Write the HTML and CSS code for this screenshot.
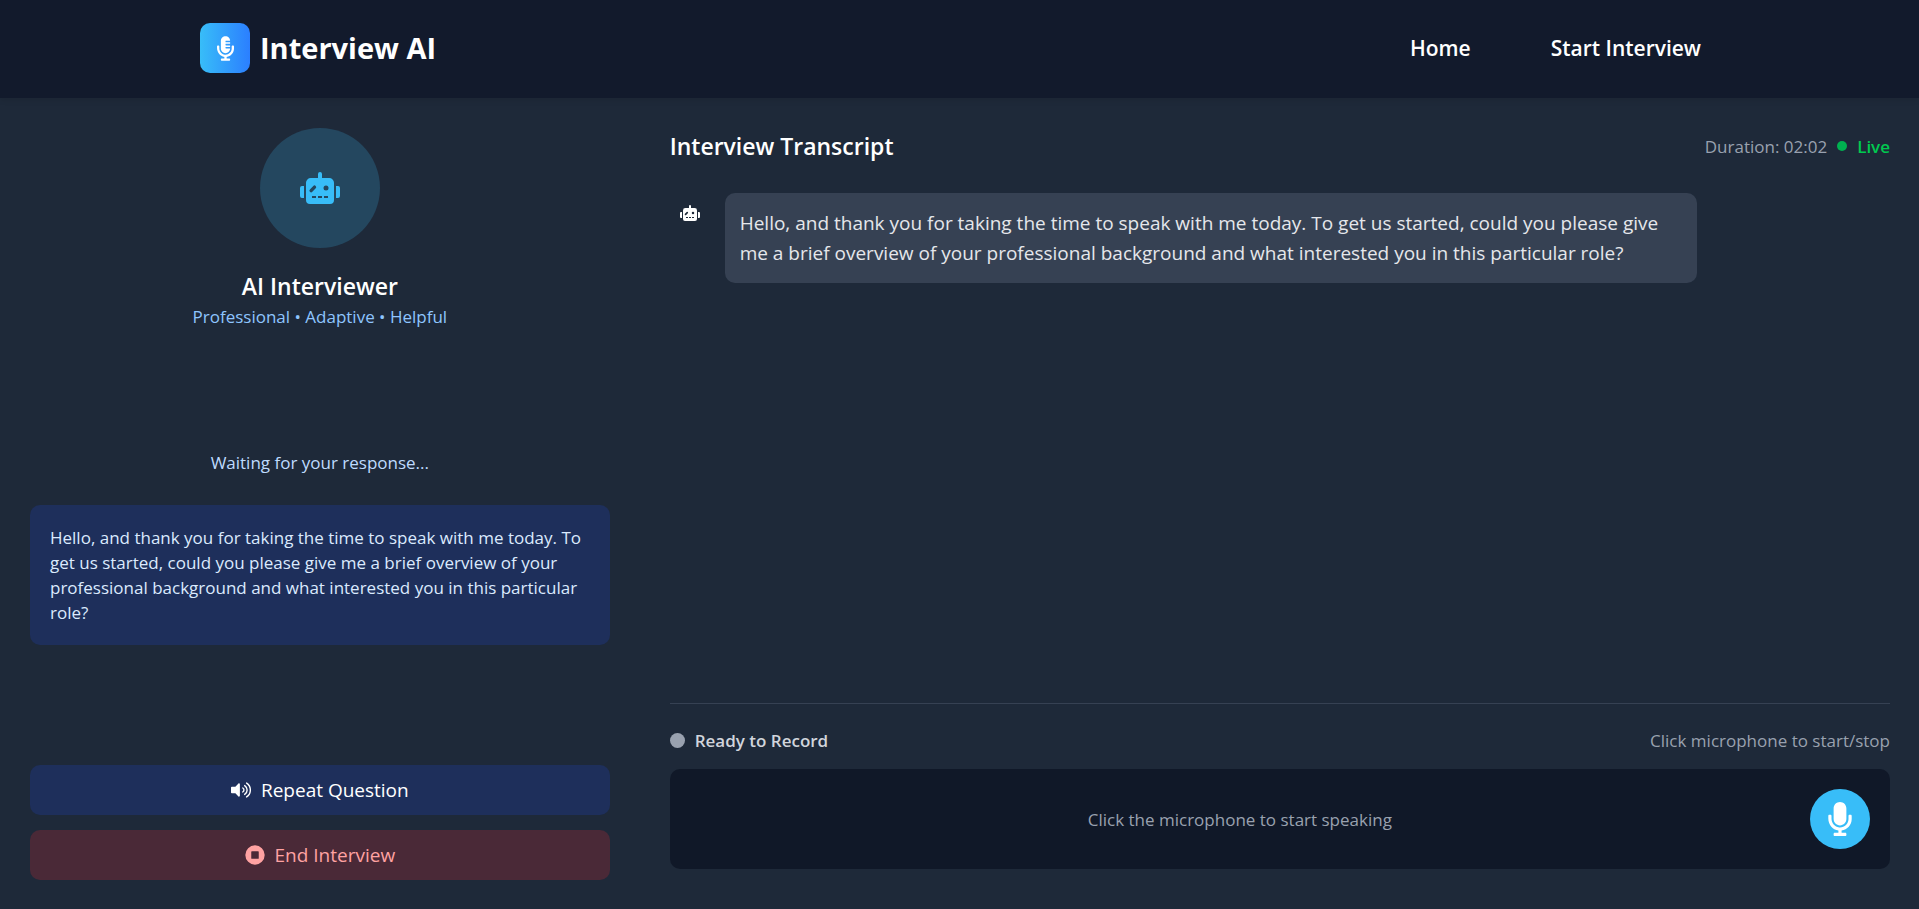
FILE: index.html
```html
<!DOCTYPE html>
<html lang="en">
<head>
<meta charset="utf-8">
<meta name="viewport" content="width=device-width, initial-scale=1">
<title>Interview AI</title>
<link rel="stylesheet" href="styles.css">
</head>
<body>
<svg class="defs" aria-hidden="true">
  <mask id="robot-face" maskUnits="userSpaceOnUse" x="0" y="0" width="640" height="512">
    <rect width="640" height="512" fill="#fff"/>
    <path d="M178 298L232 242" stroke="#000" stroke-width="54" stroke-linecap="round"/>
    <circle cx="416" cy="256" r="40" fill="#000"/>
    <path fill="#000" d="M192 384h64v32h-64zM288 384h64v32h-64zM384 384h64v32h-64z"/>
  </mask>
  <symbol id="robot" viewBox="0 0 640 512">
    <path mask="url(#robot-face)" d="M32 224h32v192H32a32 32 0 0 1-32-32V256a32 32 0 0 1 32-32zM544 172v276a64 64 0 0 1-64 64H160a64 64 0 0 1-64-64V172a76 76 0 0 1 76-76h116V32a32 32 0 0 1 64 0v64h116a76 76 0 0 1 76 76zM640 256v128a32 32 0 0 1-32 32h-32V224h32a32 32 0 0 1 32 32z"/>
  </symbol>
</svg>
<header class="site-header">
  <a class="brand" href="#">
    <span class="brand-mark">
      <svg class="brand-icon" viewBox="0 0 352 512" aria-hidden="true"><path d="M336 192h-16c-8.84 0-16 7.16-16 16v48c0 74.8-64.49 134.82-140.79 127.38C96.71 376.89 48 317.11 48 250.3V208c0-8.84-7.16-16-16-16H16c-8.84 0-16 7.16-16 16v40.16c0 89.64 63.97 169.55 152 181.69V464H96c-8.84 0-16 7.16-16 16v16c0 8.84 7.16 16 16 16h160c8.84 0 16-7.16 16-16v-16c0-8.84-7.16-16-16-16h-56v-33.77C285.71 418.47 352 344.9 352 256v-48c0-8.84-7.16-16-16-16zM176 352c53.02 0 96-42.98 96-96h-85.33c-5.89 0-10.67-3.58-10.67-8v-16c0-4.42 4.78-8 10.67-8H272v-32h-85.33c-5.89 0-10.67-3.58-10.67-8v-16c0-4.42 4.78-8 10.67-8H272v-32h-85.33c-5.89 0-10.67-3.58-10.67-8v-16c0-4.42 4.78-8 10.67-8H272c0-53.02-42.98-96-96-96S80 42.98 80 96v160c0 53.02 42.98 96 96 96z"/></svg>
    </span>
    <span class="brand-name">Interview AI</span>
  </a>
  <nav class="nav">
    <a href="#">Home</a>
    <a href="#">Start Interview</a>
  </nav>
</header>
<main class="layout">
  <aside class="sidebar">
    <section class="profile">
      <div class="portrait"><svg class="portrait-icon" aria-hidden="true"><use href="#robot"/></svg></div>
      <h2 class="title">AI Interviewer</h2>
      <p class="traits">Professional • Adaptive • Helpful</p>
    </section>
    <section class="prompt">
      <p class="waiting">Waiting for your response...</p>
      <p class="question">Hello, and thank you for taking the time to speak with me today. To get us started, could you please give me a brief overview of your professional background and what interested you in this particular role?</p>
    </section>
    <div class="actions">
      <button class="action repeat" type="button">
        <svg class="action-icon" viewBox="0 0 576 512" aria-hidden="true"><path d="M215.03 71.05L126.06 160H24c-13.26 0-24 10.74-24 24v144c0 13.25 10.74 24 24 24h102.06l88.97 88.95c15.03 15.03 40.97 4.47 40.97-16.97V88.02c0-21.46-25.96-31.98-40.97-16.97z"/><path class="waves" d="M338 198a66 66 0 0 1 0 116M394 128a152 152 0 0 1 0 256M450 56a240 240 0 0 1 0 400"/></svg>
        Repeat Question
      </button>
      <button class="action end" type="button">
        <svg class="action-icon" viewBox="0 0 512 512" aria-hidden="true"><path fill-rule="evenodd" d="M256 8a248 248 0 1 0 0 496 248 248 0 1 0 0-496zM176 160h160a16 16 0 0 1 16 16v160a16 16 0 0 1-16 16H176a16 16 0 0 1-16-16V176a16 16 0 0 1 16-16z"/></svg>
        End Interview
      </button>
    </div>
  </aside>
  <section class="conversation">
    <div class="conversation-head">
      <h2 class="title">Interview Transcript</h2>
      <div class="status">
        <span class="duration">Duration: 02:02</span>
        <span class="live-dot"></span>
        <span class="live">Live</span>
      </div>
    </div>
    <div class="transcript">
      <div class="message">
        <div class="avatar"><svg class="avatar-icon" aria-hidden="true"><use href="#robot"/></svg></div>
        <p class="bubble">Hello, and thank you for taking the time to speak with me today. To get us started, could you please give me a brief overview of your professional background and what interested you in this particular role?</p>
      </div>
    </div>
    <div class="recorder">
      <div class="recorder-head">
        <span class="ready"><span class="ready-dot"></span>Ready to Record</span>
        <span class="hint">Click microphone to start/stop</span>
      </div>
      <div class="record-panel">
        <p class="record-text">Click the microphone to start speaking</p>
        <button class="mic" type="button" aria-label="Start recording">
          <svg class="mic-icon" viewBox="0 0 352 512" aria-hidden="true"><path d="M176 352c53.02 0 96-42.98 96-96V96c0-53.02-42.98-96-96-96S80 42.98 80 96v160c0 53.02 42.98 96 96 96zm160-160h-16c-8.84 0-16 7.16-16 16v48c0 74.8-64.49 134.82-140.79 127.38C96.71 376.89 48 317.11 48 250.3V208c0-8.84-7.16-16-16-16H16c-8.84 0-16 7.16-16 16v40.16c0 89.64 63.97 169.55 152 181.69V464H96c-8.84 0-16 7.16-16 16v16c0 8.84 7.16 16 16 16h160c8.84 0 16-7.16 16-16v-16c0-8.84-7.16-16-16-16h-56v-33.77C285.71 418.47 352 344.9 352 256v-48c0-8.84-7.16-16-16-16z"/></svg>
        </button>
      </div>
    </div>
  </section>
</main>
</body>
</html>
```
FILE: styles.css
```css
* {
  box-sizing: border-box;
  margin: 0;
}

body {
  display: flex;
  flex-direction: column;
  min-height: 100vh;
  background: #1e2939;
  color: #fff;
  font-family: "Segoe UI", "Open Sans", "Noto Sans", sans-serif;
  font-size: 17px;
  line-height: 25px;
}

svg {
  display: block;
  flex: none;
  fill: currentColor;
}

a {
  color: inherit;
  text-decoration: none;
}

button {
  border: 0;
  color: inherit;
  font: inherit;
  cursor: pointer;
}

.defs {
  position: absolute;
  width: 0;
  height: 0;
}

.site-header {
  display: flex;
  align-items: center;
  justify-content: space-between;
  padding: 23px 218px 25px 200px;
  background: #121a2c;
  box-shadow: 0 2px 6px rgba(0, 0, 0, 0.1);
}

.brand {
  display: flex;
  align-items: center;
  gap: 10px;
}

.brand-mark {
  display: flex;
  align-items: center;
  justify-content: center;
  width: 50px;
  height: 50px;
  border-radius: 10px;
  background: linear-gradient(90deg, #38bdf8, #2b7fff);
}

.brand-icon {
  width: 17px;
  height: 25px;
}

.brand-name {
  font-size: 29px;
  font-weight: 700;
  line-height: 40px;
}

.nav {
  display: flex;
  gap: 80px;
  font-size: 21px;
  font-weight: 600;
}

.layout {
  display: grid;
  flex: 1;
  grid-template-columns: 1fr 2fr;
}

.sidebar {
  display: flex;
  flex-direction: column;
  justify-content: space-between;
  padding: 30px 30px 29px;
}

.profile {
  display: flex;
  flex-direction: column;
  align-items: center;
}

.portrait {
  display: flex;
  align-items: center;
  justify-content: center;
  width: 120px;
  height: 120px;
  margin-bottom: 20px;
  border-radius: 50%;
  background: #24475f;
  color: #38bdf8;
}

.portrait-icon {
  width: 40px;
  height: 32px;
}

.title {
  font-size: 23px;
  font-weight: 600;
  line-height: 36px;
}

.traits {
  color: #8ec5ff;
}

.prompt {
  display: flex;
  flex-direction: column;
  gap: 30px;
}

.waiting {
  color: #bedbff;
  text-align: center;
}

.question {
  padding: 20px;
  border-radius: 10px;
  background: #1e2f5b;
  color: #dbeafe;
}

.actions {
  display: flex;
  flex-direction: column;
  gap: 15px;
}

.action {
  display: flex;
  align-items: center;
  justify-content: center;
  gap: 10px;
  padding: 10px;
  border-radius: 10px;
  font-size: 19px;
  line-height: 30px;
}

.action-icon {
  width: 20px;
  height: 20px;
}

.waves {
  fill: none;
  stroke: currentColor;
  stroke-width: 40;
  stroke-linecap: round;
}

.repeat {
  background: #1e2f5b;
}

.end {
  background: #4a2937;
  color: #ffa2a2;
}

.conversation {
  display: flex;
  flex-direction: column;
  padding: 30px 29px 40px 30px;
}

.conversation-head {
  display: flex;
  align-items: center;
  justify-content: space-between;
  margin-bottom: 29px;
}

.status {
  display: flex;
  align-items: center;
  gap: 10px;
}

.duration,
.hint {
  color: #99a1af;
}

.live-dot {
  width: 10px;
  height: 10px;
  border-radius: 50%;
  background: #00b150;
}

.live {
  color: #00c950;
  font-weight: 600;
}

.transcript {
  flex: 1;
  padding-right: 5px;
}

.message {
  display: flex;
  align-items: flex-start;
  gap: 15px;
}

.avatar {
  display: flex;
  align-items: center;
  justify-content: center;
  width: 40px;
  height: 40px;
}

.avatar-icon {
  width: 20px;
  height: 16px;
}

.bubble {
  max-width: 80%;
  padding: 15px;
  border-radius: 10px;
  background: #364153;
  color: #e5e7eb;
  font-size: 19px;
  line-height: 30px;
}

.recorder {
  padding-top: 24px;
  border-top: 1px solid #364153;
}

.recorder-head {
  display: flex;
  align-items: center;
  justify-content: space-between;
  margin-bottom: 16px;
}

.ready {
  display: flex;
  align-items: center;
  gap: 10px;
  color: #d1d5dc;
  font-weight: 600;
}

.ready-dot {
  width: 15px;
  height: 15px;
  border-radius: 50%;
  background: #99a1af;
}

.record-panel {
  display: flex;
  align-items: center;
  gap: 20px;
  padding: 20px;
  border-radius: 10px;
  background: #101828;
}

.record-text {
  flex: 1;
  color: #99a1af;
  text-align: center;
}

.mic {
  display: flex;
  align-items: center;
  justify-content: center;
  width: 60px;
  height: 60px;
  padding: 0;
  border-radius: 50%;
  background: #38bdf8;
}

.mic-icon {
  width: 24px;
  height: 34px;
}
```
